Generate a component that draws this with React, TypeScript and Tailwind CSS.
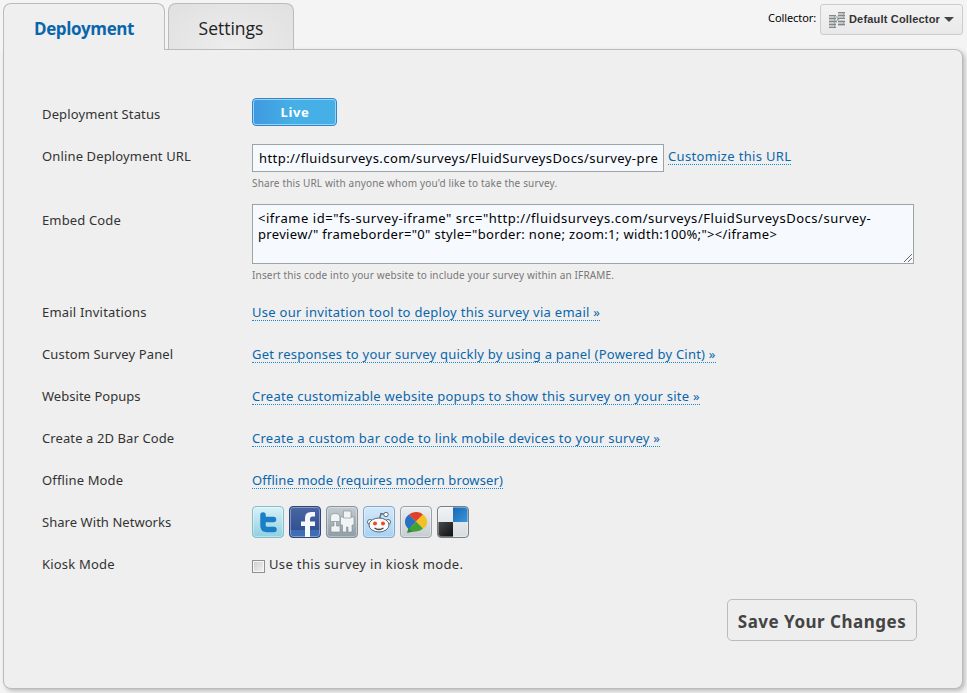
import React from "react";

const sans = "font-['Noto_Sans','Open_Sans',sans-serif]";

function Link({ children, className = "" }: { children: React.ReactNode; className?: string }) {
  return (
    <a className={`inline-block h-[17px] whitespace-nowrap border-b border-dotted border-[#1c8ac9] leading-[16px] text-[#0a66ac] ${className}`}>
      {children}
    </a>
  );
}

function Row({ label, labelClass = "tracking-[0.14px]", height = "h-[42px]", children }: { label: string; labelClass?: string; height?: string; children: React.ReactNode }) {
  return (
    <div className={`flex items-start ${height}`}>
      <div className={`w-[210px] shrink-0 whitespace-nowrap leading-[42px] ${labelClass}`}>{label}</div>
      <div className="min-w-0 flex-1">{children}</div>
    </div>
  );
}

function Tile({ id, from, to, stroke, children }: { id: string; from: string; to: string; stroke: string; children: React.ReactNode }) {
  return (
    <svg width="32" height="32" viewBox="0 0 32 32" className="block">
      <defs>
        <linearGradient id={id} x1="0" y1="0" x2="0" y2="1">
          <stop offset="0" stopColor={from} />
          <stop offset="1" stopColor={to} />
        </linearGradient>
        <clipPath id={`${id}-clip`}>
          <rect x="1" y="1" width="30" height="30" rx="3" />
        </clipPath>
      </defs>
      <rect x=".5" y=".5" width="31" height="31" rx="3.5" fill={`url(#${id})`} />
      <g clipPath={`url(#${id}-clip)`}>{children}</g>
      <rect x="1.5" y="1.5" width="29" height="29" rx="2.5" fill="none" stroke="#fff" strokeOpacity=".35" />
      <rect x=".5" y=".5" width="31" height="31" rx="3.5" fill="none" stroke={stroke} />
    </svg>
  );
}

function Networks() {
  return (
    <div className="flex gap-[5px] pt-[5px]">
      <Tile id="tw" from="#d9f2f7" to="#8fcfe0" stroke="#86bccb">
        <path d="M11 9v10.500q0 4 4 4h7M11 13.500h10.500" fill="none" stroke="#1a7fc6" strokeWidth="5.500" strokeLinecap="round" strokeLinejoin="round" />
      </Tile>
      <Tile id="fb" from="#4a66a3" to="#2c4a8c" stroke="#2c4477">
        <rect x="0" y="24" width="32" height="8" fill="#3f6db5" />
        <path d="M16 32V20h-4v-4.500h4V12q0-6 6-6h4v4.500h-2.500q-2.500 0-2.500 2.500v2.500h5V20h-5v12z" fill="#f4f7fb" />
      </Tile>
      <Tile id="dg" from="#c3ccd1" to="#8e9ca3" stroke="#87939a">
        <g fill="#f1f3f4" stroke="#7d8b93" strokeWidth=".6">
          <path d="M8 15h2.500v5H14v6H5v-6h3z" />
          <path d="M4.500 15.500v-4q0-4 4.700-4t4.700 4v4z" />
          <path d="M14.500 11h13.500v8h-2v7h-4v-5h-1.500v5h-4v-7h-2z" />
          <path d="M17.500 5h7.500v7h-7.500z" />
        </g>
      </Tile>
      <Tile id="rd" from="#d4e9fa" to="#a9d1f2" stroke="#7fa8ca">
        <path d="M16.500 13l1.500-5.500 4 1" fill="none" stroke="#596b79" strokeWidth="1.300" />
        <circle cx="23" cy="8.500" r="2.200" fill="#fff" stroke="#596b79" />
        <circle cx="7" cy="16" r="2.500" fill="#fff" stroke="#596b79" />
        <circle cx="25" cy="16" r="2.500" fill="#fff" stroke="#596b79" />
        <ellipse cx="16" cy="19" rx="10" ry="7" fill="#fafbfc" stroke="#596b79" />
        <circle cx="12" cy="17.500" r="2" fill="#f04a24" />
        <circle cx="20" cy="17.500" r="2" fill="#f04a24" />
        <path d="M11.500 22q4.500 3 9 0" fill="none" stroke="#444" strokeWidth="1.300" />
      </Tile>
      <Tile id="bz" from="#eceff1" to="#c5ccd1" stroke="#9aa2a8">
        <path d="M9 20l-2 7 9-2z" fill="#2c8a35" />
        <path d="M16 15.500L9 8.500q-4.500 3-4 8 .3 4 4 6.500z" fill="#2b70bf" />
        <path d="M16 15.500L9 8.500q3-3 8-2.500 4 .2 6 2.500z" fill="#e0402a" />
        <path d="M16 15.500l7-7q4 2.500 4 7.500t-4 6.500z" fill="#f4c024" />
        <path d="M16 15.500l7 7q-3 3-8 3-4 0-6-2.500z" fill="#43a036" />
      </Tile>
      <Tile id="dl" from="#f1f3f5" to="#d7dcdf" stroke="#777f85">
        <defs>
          <linearGradient id="dl-blue" x1="0" y1="0" x2="1" y2="1">
            <stop offset="0" stopColor="#1566b4" />
            <stop offset="1" stopColor="#3d97da" />
          </linearGradient>
          <linearGradient id="dl-black" x1="0" y1="0" x2="1" y2="1">
            <stop offset="0" stopColor="#4a4c4f" />
            <stop offset="1" stopColor="#0c0d0e" />
          </linearGradient>
        </defs>
        <rect x="16" y="0" width="16" height="16" fill="url(#dl-blue)" />
        <rect x="0" y="16" width="16" height="16" fill="url(#dl-black)" />
      </Tile>
    </div>
  );
}

export default function App() {
  return (
    <div className={`h-[693px] w-[967px] overflow-hidden bg-[#f4f4f4] text-[13px] text-[#333] ${sans}`}>
      <header className="flex h-[49px] items-start pl-[3px] pt-[3px]">
        <div className="relative z-10 h-[47px] w-[162px] shrink-0 rounded-t-[8px] border border-b-0 border-[#bbb] bg-[#efefef] text-center font-['Open_Sans'] text-[17px] font-bold leading-[49px] tracking-[-0.4px] text-[#0a66ac]">
          Deployment
        </div>
        <div className="ml-[3px] h-[46px] w-[126px] shrink-0 rounded-t-[8px] border border-b-0 border-[#bbb] bg-[radial-gradient(ellipse_at_50%_100%,#ededed,#e0e0e0)] text-center font-['Open_Sans'] text-[17.5px] leading-[49px] text-[#222]">
          Settings
        </div>
        <div className="ml-auto mr-[4px] flex">
          <span className="mr-[4px] text-[11px] leading-[30px] tracking-[-0.1px] text-black">Collector:</span>
          <div className="mt-px flex h-[31px] w-[143px] items-center rounded-[3px] border border-[#ccc] bg-gradient-to-b from-[#f3f3f3] to-[#e9e9e9] pl-[8px]">
            <svg width="16" height="16" viewBox="0 0 16 16" className="mr-[4px] shrink-0">
              <path d="M6 12.500l4-8M7 5h2l1 7" stroke="#999" fill="none" />
              <path d="M0 3h7v13H0zM9 0h7v7H9zM9 8h7v6H9z" fill="#c3c6c8" />
              <path d="M0 3.500h7M0 6.500h7M0 9.500h7M0 12.500h7M0 15.500h7M9 .5h7M9 3.500h7M9 6.500h7M9 9.500h7M9 12.500h7" stroke="#85888b" />
              <path d="M5 5h1M5 8h1M5 11h1M5 14h1M14 2h1M14 5h1M14 11h1" stroke="#6d9a6d" />
            </svg>
            <span className="whitespace-nowrap font-['Liberation_Sans'] text-[11px] font-bold tracking-[0.18px] text-[#333]">Default Collector</span>
            <span className="ml-[4px] border-x-[5px] border-t-[5px] border-x-transparent border-t-[#444]" />
          </div>
        </div>
      </header>
      <main className="ml-[3px] h-[640px] w-[960px] rounded-[8px] rounded-tl-none border border-[#bbb] bg-[#efefef] pl-[38px] pt-[43px] shadow-[2px_2px_4px_#bbb]">
        <Row label="Deployment Status">
          <div className="mt-[5px] h-[28px] w-[85px] rounded-[4px] border border-[#2f86cc] bg-[#9dd3f2] p-px">
            <div className="h-full rounded-[2px] bg-gradient-to-r from-[#3f9ae0] to-[#46b0e6] to-50% pl-px text-center font-bold leading-[24px] tracking-[0.7px] text-white">Live</div>
          </div>
        </Row>
        <Row label="Online Deployment URL" height="h-[64px]">
          <div className="flex pt-[9px]">
            <div className="h-[28px] w-[412px] border border-[#9ca5a1] bg-[#f6faff] pl-[6px] text-black">
              <div className="whitespace-nowrap leading-[27px] tracking-[0.44px]">http://fluidsurveys.com/surveys/FluidSurveysDocs/survey-pre</div>
            </div>
            <Link className="ml-[4px] mt-[4px] tracking-[0.33px]">Customize this URL</Link>
          </div>
          <div className="whitespace-nowrap text-[10px] leading-[22px] tracking-[0.16px] text-[#777]">Share this URL with anyone whom you'd like to take the survey.</div>
        </Row>
        <Row label="Embed Code" height="h-[92px]">
          <div className="relative mt-[5px] h-[60px] w-[662px] border border-[#9ca5a1] bg-[#f6faff] px-[5px] pt-[5px] leading-[16px] text-black">
            <div className="whitespace-nowrap tracking-[0.53px]">{'<iframe id="fs-survey-iframe" src="http://fluidsurveys.com/surveys/FluidSurveysDocs/survey-'}</div>
            <div className="whitespace-nowrap tracking-[0.33px]">{'preview/" frameborder="0" style="border: none; zoom:1; width:100%;"></iframe>'}</div>
            <svg className="absolute bottom-px right-px" width="8" height="8"><path d="M0 8l8-8M4 8l4-4" stroke="#666" fill="none" /></svg>
          </div>
          <div className="whitespace-nowrap text-[10px] leading-[22px] tracking-[0.16px] text-[#777]">Insert this code into your website to include your survey within an IFRAME.</div>
        </Row>
        <Row label="Email Invitations" labelClass="tracking-[0.2px]"><Link className="mt-[13px] tracking-[0.28px]">Use our invitation tool to deploy this survey via email »</Link></Row>
        <Row label="Custom Survey Panel"><Link className="mt-[13px] tracking-[0.235px]">Get responses to your survey quickly by using a panel (Powered by Cint) »</Link></Row>
        <Row label="Website Popups" labelClass="tracking-[0.03px]"><Link className="mt-[13px] tracking-[0.26px]">Create customizable website popups to show this survey on your site »</Link></Row>
        <Row label="Create a 2D Bar Code" labelClass="tracking-[0.1px]"><Link className="mt-[13px] tracking-[0.265px]">Create a custom bar code to link mobile devices to your survey »</Link></Row>
        <Row label="Offline Mode"><Link className="mt-[13px] tracking-[0.105px]">Offline mode (requires modern browser)</Link></Row>
        <Row label="Share With Networks" labelClass="tracking-[0.05px]"><Networks /></Row>
        <Row label="Kiosk Mode" labelClass="tracking-[0.2px]">
          <label className="flex leading-[42px]">
            <span className="mr-[4px] mt-[17px] h-[13px] w-[13px] border border-[#8e8f8f] bg-gradient-to-br from-[#ccc] to-[#f3f3f3] shadow-[inset_0_0_0_1px_#f6f6f6]" />
            <span className="tracking-[0.35px]">Use this survey in kiosk mode.</span>
          </label>
        </Row>
        <button className="ml-[685px] mt-[14px] block h-[42px] w-[190px] whitespace-nowrap rounded-[5px] border border-[#bbb] bg-[#eee] pt-[3px] text-center text-[17px] font-bold tracking-[0.5px] text-[#444]">
          Save Your Changes
        </button>
      </main>
    </div>
  );
}
